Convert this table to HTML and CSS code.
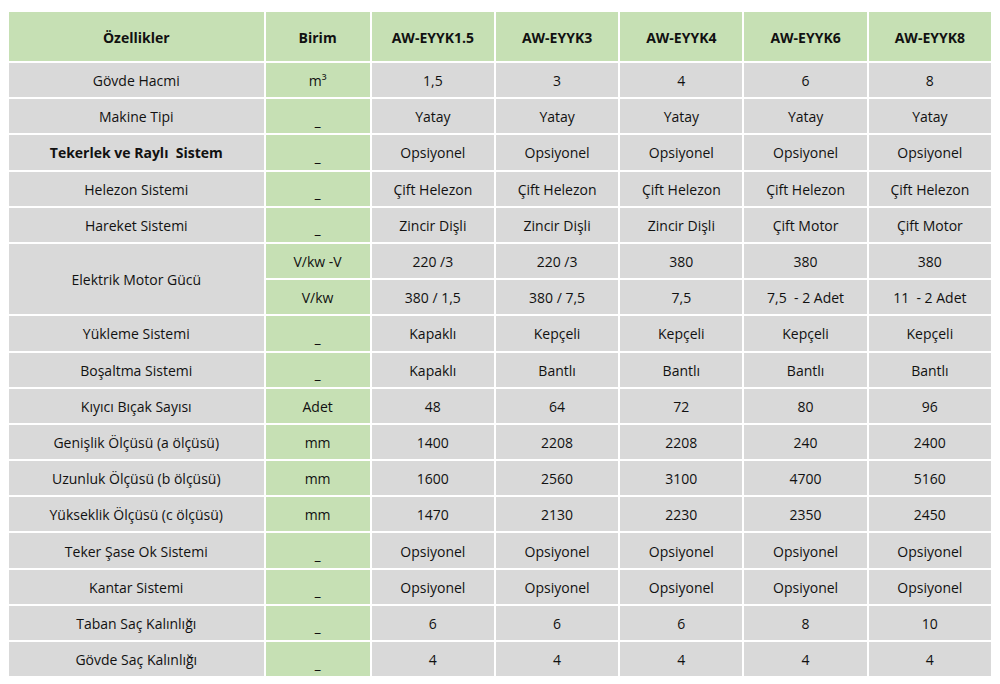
FILE: index.html
```html
<!DOCTYPE html>
<html lang="tr">
<head>
<meta charset="utf-8">
<title>Özellikler</title>
<link rel="stylesheet" href="styles.css">
</head>
<body>
<table class="spec">
  <colgroup>
    <col class="c-name"><col class="c-unit"><col class="c-val"><col class="c-val"><col class="c-val"><col class="c-val"><col class="c-val">
  </colgroup>
  <thead>
    <tr class="head">
      <th>Özellikler</th><th>Birim</th><th>AW-EYYK1.5</th><th>AW-EYYK3</th><th>AW-EYYK4</th><th>AW-EYYK6</th><th>AW-EYYK8</th>
    </tr>
  </thead>
  <tbody>
    <tr><td>Gövde Hacmi</td><td class="unit">m³</td><td>1,5</td><td>3</td><td>4</td><td>6</td><td>8</td></tr>
    <tr><td>Makine Tipi</td><td class="unit dash">_</td><td>Yatay</td><td>Yatay</td><td>Yatay</td><td>Yatay</td><td>Yatay</td></tr>
    <tr><td class="strong">Tekerlek ve Raylı&nbsp; Sistem</td><td class="unit dash">_</td><td>Opsiyonel</td><td>Opsiyonel</td><td>Opsiyonel</td><td>Opsiyonel</td><td>Opsiyonel</td></tr>
    <tr><td>Helezon Sistemi</td><td class="unit dash">_</td><td>Çift Helezon</td><td>Çift Helezon</td><td>Çift Helezon</td><td>Çift Helezon</td><td>Çift Helezon</td></tr>
    <tr><td>Hareket Sistemi</td><td class="unit dash">_</td><td>Zincir Dişli</td><td>Zincir Dişli</td><td>Zincir Dişli</td><td>Çift Motor</td><td>Çift Motor</td></tr>
    <tr><td rowspan="2">Elektrik Motor Gücü</td><td class="unit">V/kw -V</td><td>220 /3</td><td>220 /3</td><td>380</td><td>380</td><td>380</td></tr>
    <tr><td class="unit">V/kw</td><td>380 / 1,5</td><td>380 / 7,5</td><td>7,5</td><td>7,5&nbsp; - 2 Adet</td><td>11&nbsp; - 2 Adet</td></tr>
    <tr><td>Yükleme Sistemi</td><td class="unit dash">_</td><td>Kapaklı</td><td>Kepçeli</td><td>Kepçeli</td><td>Kepçeli</td><td>Kepçeli</td></tr>
    <tr><td>Boşaltma Sistemi</td><td class="unit dash">_</td><td>Kapaklı</td><td>Bantlı</td><td>Bantlı</td><td>Bantlı</td><td>Bantlı</td></tr>
    <tr><td>Kıyıcı Bıçak Sayısı</td><td class="unit">Adet</td><td>48</td><td>64</td><td>72</td><td>80</td><td>96</td></tr>
    <tr><td>Genişlik Ölçüsü (a ölçüsü)</td><td class="unit">mm</td><td>1400</td><td>2208</td><td>2208</td><td>240</td><td>2400</td></tr>
    <tr><td>Uzunluk Ölçüsü (b ölçüsü)</td><td class="unit">mm</td><td>1600</td><td>2560</td><td>3100</td><td>4700</td><td>5160</td></tr>
    <tr><td>Yükseklik Ölçüsü (c ölçüsü)</td><td class="unit">mm</td><td>1470</td><td>2130</td><td>2230</td><td>2350</td><td>2450</td></tr>
    <tr><td>Teker Şase Ok Sistemi</td><td class="unit dash">_</td><td>Opsiyonel</td><td>Opsiyonel</td><td>Opsiyonel</td><td>Opsiyonel</td><td>Opsiyonel</td></tr>
    <tr><td>Kantar Sistemi</td><td class="unit dash">_</td><td>Opsiyonel</td><td>Opsiyonel</td><td>Opsiyonel</td><td>Opsiyonel</td><td>Opsiyonel</td></tr>
    <tr><td>Taban Saç Kalınlığı</td><td class="unit dash">_</td><td>6</td><td>6</td><td>6</td><td>8</td><td>10</td></tr>
    <tr><td>Gövde Saç Kalınlığı</td><td class="unit dash">_</td><td>4</td><td>4</td><td>4</td><td>4</td><td>4</td></tr>
  </tbody>
</table>
</body>
</html>
```

FILE: styles.css
```css
html, body {
  margin: 0;
  padding: 0;
  background: #ffffff;
}

body {
  font-family: "Open Sans", Lato, "DejaVu Sans", sans-serif;
  font-size: 14px;
  color: #111111;
}

.spec {
  table-layout: fixed;
  border-collapse: separate;
  border-spacing: 2px;
  margin: 10px 0 0 7px;
  width: 986px;
}

.c-name { width: 254px; }
.c-unit { width: 104px; }
.c-val { width: 122px; }

.spec th,
.spec td {
  box-sizing: border-box;
  padding: 2px 0 0;
  text-align: center;
  vertical-align: middle;
  white-space: nowrap;
  background: #d9d9d9;
  line-height: 18px;
  font-weight: 500;
}

.spec .head th {
  background: #c6e0b4;
  height: 49px;
  font-weight: 700;
}

.spec tbody td {
  height: 34.2px;
}

.spec td.unit {
  background: #c6e0b4;
}

.spec td.dash {
  padding-top: 9px;
  font-weight: 700;
}

.spec td.strong {
  font-weight: 700;
}
```
